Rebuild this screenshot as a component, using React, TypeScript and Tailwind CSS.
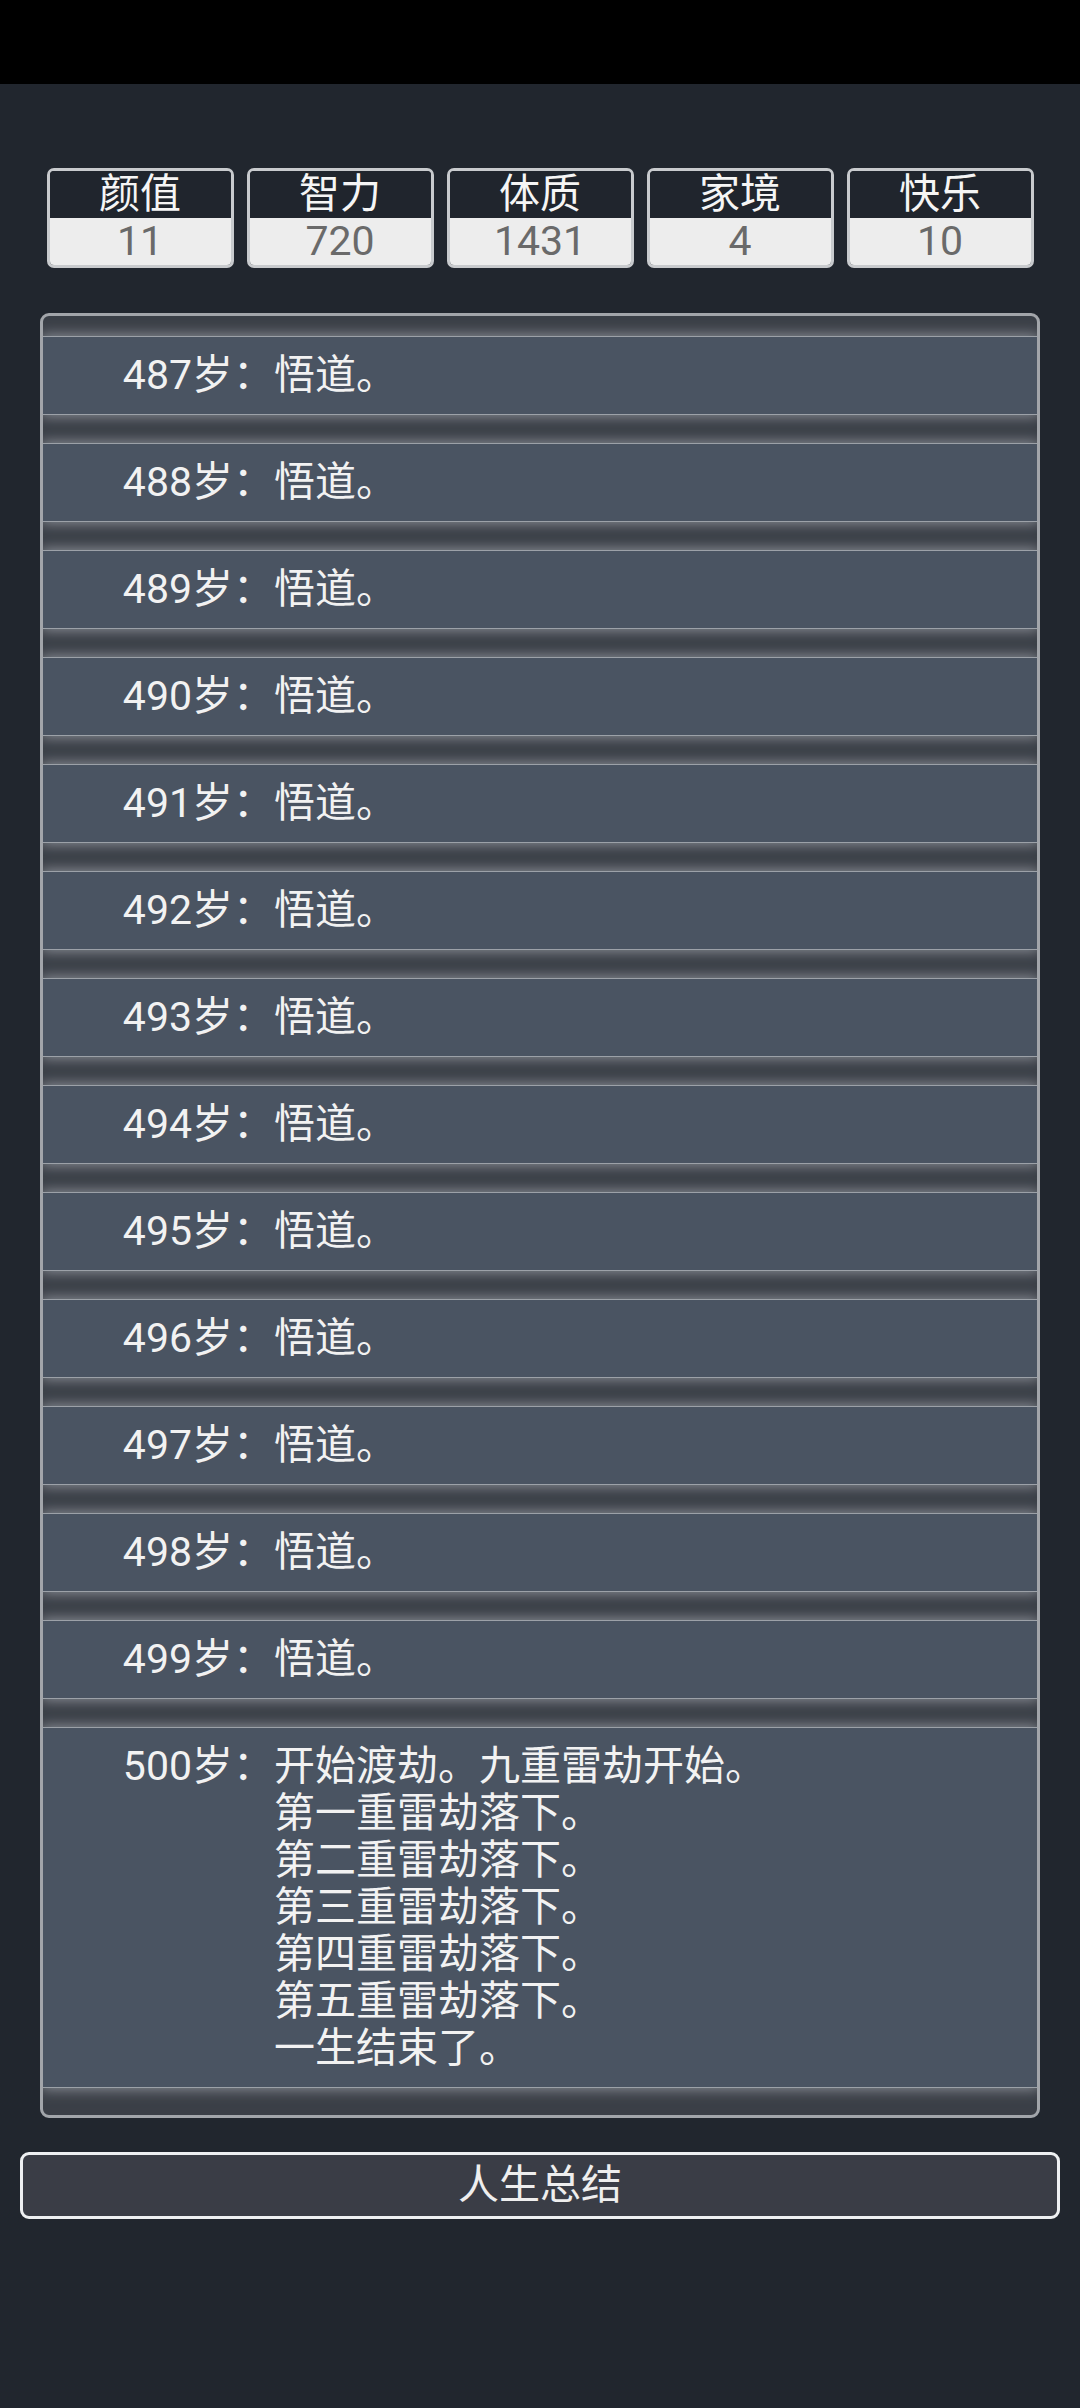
import React from 'react';

const STATS = [
  { label: '颜值', value: 11 },
  { label: '智力', value: 720 },
  { label: '体质', value: 1431 },
  { label: '家境', value: 4 },
  { label: '快乐', value: 10 },
];

const EVENTS: { age: number; lines: string[] }[] = [
  ...Array.from({ length: 13 }, (_, i) => ({ age: 487 + i, lines: ['悟道。'] })),
  {
    age: 500,
    lines: [
      '开始渡劫。九重雷劫开始。',
      '第一重雷劫落下。',
      '第二重雷劫落下。',
      '第三重雷劫落下。',
      '第四重雷劫落下。',
      '第五重雷劫落下。',
      '一生结束了。',
    ],
  },
];

function StatBox({ label, value }: { label: string; value: number }) {
  return (
    <div className="w-[187px] overflow-hidden rounded-[7px] border-[3px] border-[#c8cacd]">
      <div className="flex h-[47px] items-center justify-center bg-[#20252d] text-[41px] leading-none text-[#f5f5f5]">
        {label}
      </div>
      <div className="flex h-[47px] items-center justify-center bg-[#ededed] text-[41px] leading-none text-[#6a6a6a]">
        {value}
      </div>
    </div>
  );
}

function EventRow({ age, lines }: { age: number; lines: string[] }) {
  return (
    <div className="flex bg-[#4a5462] py-[15px] text-[41px] leading-[47px] text-[#f2f2f2] shadow-[0_0_0_1px_#9ca1a8,0_0_13px_2px_rgba(170,175,183,0.75)]">
      <div className="w-[231px] shrink-0 text-right">{age}岁：</div>
      <div className="flex flex-col">
        {lines.map((line, i) => (
          <span key={i}>{line}</span>
        ))}
      </div>
    </div>
  );
}

export default function App() {
  return (
    <div className="min-h-screen bg-[#21262e] font-[family-name:Roboto,'Noto_Sans_CJK_SC',sans-serif] [text-spacing-trim:space-all]">
      <div className="h-[84px] bg-black" />

      <div className="flex justify-center gap-[13px] pt-[84px]">
        {STATS.map((s) => (
          <StatBox key={s.label} label={s.label} value={s.value} />
        ))}
      </div>

      <div className="mx-[40px] mt-[45px] overflow-hidden rounded-[9px] border-[3px] border-[#a2a5aa] bg-[#3b3f47]">
        <div className="flex flex-col gap-[30px] pt-[21px] pb-[28px]">
          {EVENTS.map((e) => (
            <EventRow key={e.age} age={e.age} lines={e.lines} />
          ))}
        </div>
      </div>

      <button className="mx-[20px] mt-[34px] flex h-[67px] w-[1040px] items-center justify-center rounded-[9px] border-[3px] border-[#eef0f2] bg-[#3a3d46] text-[41px] leading-none text-[#eeeeee]">
        人生总结
      </button>
    </div>
  );
}
